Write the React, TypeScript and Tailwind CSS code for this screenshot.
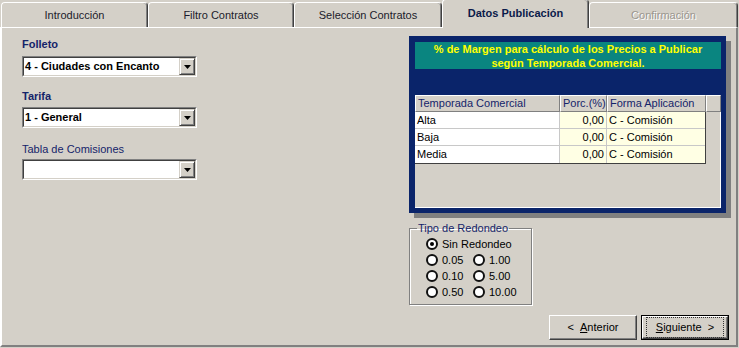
import type { ReactNode } from 'react';

const tabs = [
  { label: 'Introducción', w: 147 },
  { label: 'Filtro Contratos', w: 146 },
  { label: 'Selección Contratos', w: 148 },
  { label: 'Datos Publicación', w: 147, active: true },
  { label: 'Confirmación', w: 149, disabled: true },
];

const rows = [
  { temporada: 'Alta', porc: '0,00', forma: 'C - Comisión' },
  { temporada: 'Baja', porc: '0,00', forma: 'C - Comisión' },
  { temporada: 'Media', porc: '0,00', forma: 'C - Comisión' },
];

function Tab({ label, w, active, disabled }: { label: string; w: number; active?: boolean; disabled?: boolean }) {
  if (active) {
    return (
      <div
        style={{ width: w }}
        className="relative z-10 -mb-px flex h-[29px] items-center justify-center rounded-t-[4px] border-l border-t border-r border-l-white border-t-white border-r-[#404040] bg-[#d4d0c8] pb-[1px] font-bold text-[#0a1a4a] shadow-[inset_-1px_0_0_#808080]"
      >
        {label}
      </div>
    );
  }
  return (
    <div
      style={{ width: w }}
      className={`flex h-[25px] items-center justify-center rounded-t-[4px] border-l border-t border-r border-l-white border-t-white border-r-[#404040] bg-[#d4d0c8] shadow-[inset_-1px_0_0_#808080] ${
        disabled ? 'text-[#9a968e] [text-shadow:1px_1px_0_#fff]' : 'text-[#1b1b2b]'
      }`}
    >
      {label}
    </div>
  );
}

function Combo({ value }: { value?: string }) {
  return (
    <div className="h-[21px] w-[175px] border border-t-[#808080] border-l-[#808080] border-b-white border-r-white">
      <div className="flex h-full items-center border border-t-[#404040] border-l-[#404040] border-b-[#d4d0c8] border-r-[#d4d0c8] bg-white">
        <span className="flex-1 pl-[1px] font-bold text-black">{value}</span>
        <div className="flex h-[17px] w-[16px] items-center justify-center border border-t-[#d4d0c8] border-l-[#d4d0c8] border-b-[#404040] border-r-[#404040] bg-[#d4d0c8] shadow-[inset_1px_1px_0_#fff,inset_-1px_-1px_0_#808080]">
          <svg width="7" height="4" viewBox="0 0 7 4">
            <path d="M0 0h7L3.5 4z" fill="#000" />
          </svg>
        </div>
      </div>
    </div>
  );
}

function Radio({ label, checked }: { label: string; checked?: boolean }) {
  return (
    <div className="flex h-[16px] items-center gap-[4px]">
      <div className="flex h-[12px] w-[12px] items-center justify-center rounded-full border-2 border-[#111] bg-white">
        {checked && <div className="h-[4px] w-[4px] rounded-full bg-black" />}
      </div>
      <span className="text-black">{label}</span>
    </div>
  );
}

function Btn({ children, def }: { children: ReactNode; def?: boolean }) {
  return (
    <div className={`h-[25px] w-[88px] ${def ? 'border border-black' : ''}`}>
      <div className="flex h-full items-center justify-center border border-t-white border-l-white border-b-[#404040] border-r-[#404040] shadow-[inset_-1px_-1px_0_#808080]">
        <div
          className={`flex h-full w-full items-center justify-center ${
            def ? 'm-[3px] border border-dotted border-[#333]' : ''
          }`}
        >
          {children}
        </div>
      </div>
    </div>
  );
}

export default function App() {
  return (
    <div className="h-[348px] w-[739px] bg-[#d4d0c8] font-['Liberation_Sans',Arial,sans-serif] text-[11px] leading-[13px]">
      {/* tab strip */}
      <div className="flex h-[27px] items-end pl-[1px]">
        {tabs.map((t) => (
          <Tab key={t.label} {...t} />
        ))}
      </div>

      {/* page */}
      <div className="flex h-[320px] w-[738px] border-l-2 border-t border-r-2 border-b-2 border-l-white border-t-white border-r-[#808080] border-b-[#808080]">
        {/* left column */}
        <div className="ml-[20px] flex w-[175px] flex-col pt-[10px]">
          <div className="h-[13px] font-bold text-[#14246a]">Folleto</div>
          <div className="mt-[5px]">
            <Combo value="4 - Ciudades con Encanto" />
          </div>
          <div className="mt-[13px] h-[13px] font-bold text-[#14246a]">Tarifa</div>
          <div className="mt-[4px]">
            <Combo value="1 - General" />
          </div>
          <div className="mt-[15px] h-[13px] text-[#14246a]">Tabla de Comisiones</div>
          <div className="mt-[3px]">
            <Combo />
          </div>
        </div>

        {/* right column */}
        <div className="ml-[212px] flex w-[321px] flex-col pt-[8px]">
          <div className="h-[177px] w-[317px] bg-[#0a246a] pb-[5px] pl-[6px] pr-[5px] pt-[6px] shadow-[5px_5px_0_#808080]">
            <div className="flex h-[27px] flex-col items-center justify-center bg-[#0a8580] font-bold leading-[14px] text-[#ffff00]">
              <div>% de Margen para cálculo de los Precios a Publicar</div>
              <div>según Temporada Comercial.</div>
            </div>
            <div className="mt-[26px] h-[113px] bg-[#d4d0c8] shadow-[inset_-1px_-1px_0_#fff]">
              <div className="flex h-[17px] text-[#14246a]">
                <div className="w-[145px] border border-t-white border-l-white border-b-[#808080] border-r-[#808080] bg-[#d4d0c8] pl-[2px] leading-[15px]">
                  Temporada Comercial
                </div>
                <div className="w-[47px] border border-t-white border-l-white border-b-[#808080] border-r-[#808080] bg-[#d4d0c8] pl-[2px] leading-[15px]">
                  Porc.(%)
                </div>
                <div className="w-[99px] border border-t-white border-l-white border-b-[#808080] border-r-[#808080] bg-[#d4d0c8] pl-[2px] leading-[15px]">
                  Forma Aplicación
                </div>
                <div className="w-[15px] border border-t-white border-l-white border-b-[#808080] border-r-[#808080] bg-[#d4d0c8]" />
              </div>
              <div className="w-[291px] border-b border-r border-[#404040]">
                {rows.map((r) => (
                  <div key={r.temporada} className="flex h-[17px] border-b border-[#c8c8c8] text-black last:border-b-0">
                    <div className="w-[145px] border-r border-[#c8c8c8] bg-white pl-[2px] leading-[16px]">{r.temporada}</div>
                    <div className="w-[47px] border-r border-[#c8c8c8] bg-[#ffffe4] pr-[2px] text-right leading-[16px]">{r.porc}</div>
                    <div className="flex-1 bg-[#ffffe4] pl-[2px] leading-[16px]">{r.forma}</div>
                  </div>
                ))}
              </div>
            </div>
          </div>

          {/* rounding group */}
          <fieldset className="mt-[9px] w-[123px] border border-[#808080] pb-[4px] pl-[16px] pt-[1px] shadow-[inset_1px_1px_0_#fff,1px_1px_0_#fff]">
            <legend className="ml-[-9px] px-[1px] text-[#14246a]">Tipo de Redondeo</legend>
            <Radio label="Sin Redondeo" checked />
            <div className="grid grid-cols-[47px_1fr]">
              <Radio label="0.05" />
              <Radio label="1.00" />
              <Radio label="0.10" />
              <Radio label="5.00" />
              <Radio label="0.50" />
              <Radio label="10.00" />
            </div>
          </fieldset>

          {/* navigation */}
          <div className="mr-[1px] mt-[10px] flex justify-end gap-[4px] text-black">
            <Btn>
              &lt;&nbsp;&nbsp;<u>A</u>nterior
            </Btn>
            <Btn def>
              <u>S</u>iguiente&nbsp;&nbsp;&gt;
            </Btn>
          </div>
        </div>
      </div>
    </div>
  );
}
